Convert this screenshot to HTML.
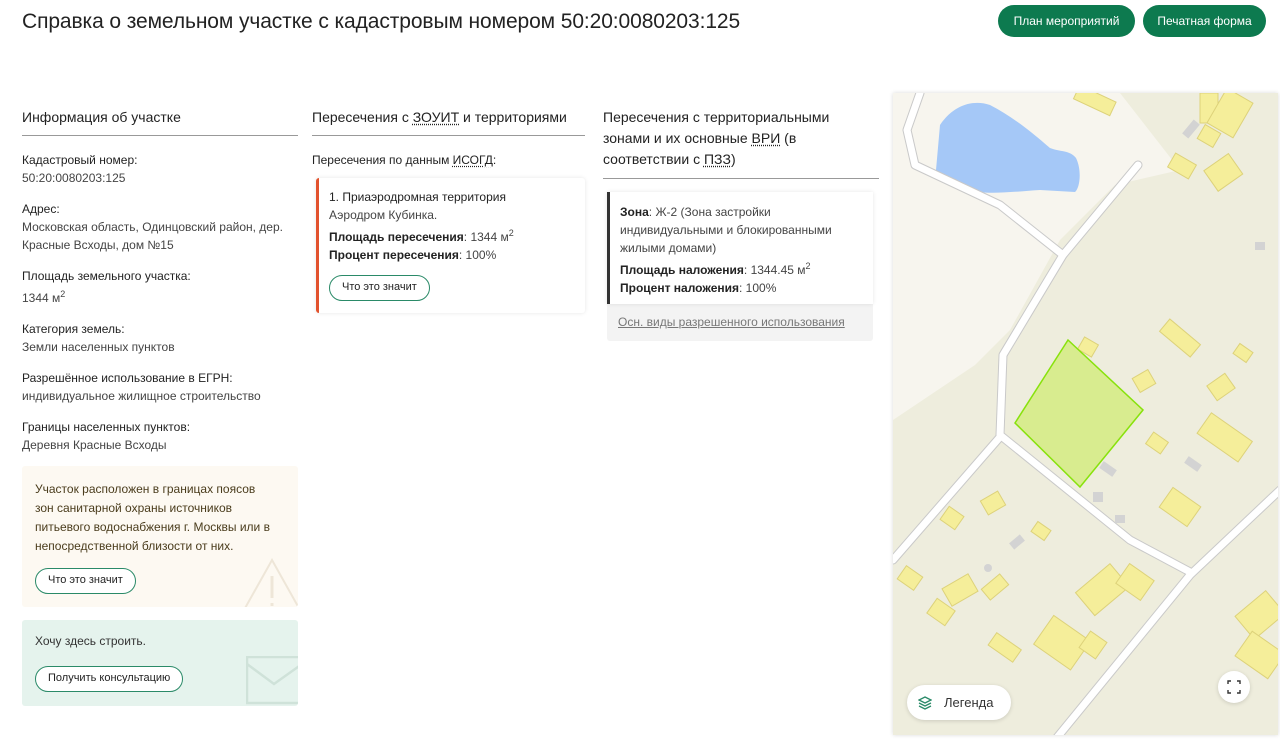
<!DOCTYPE html>
<html><head><meta charset="utf-8">
<style>
*{box-sizing:border-box;margin:0;padding:0}
body{width:1280px;height:748px;overflow:hidden;background:#fff;font-family:"Liberation Sans",sans-serif;color:#222;position:relative}
.abs{position:absolute}
h1{position:absolute;left:22px;top:10px;font-size:21px;font-weight:normal;color:#222;letter-spacing:-0.1px}
.gbtn{position:absolute;top:5px;height:32px;border-radius:16px;background:#0d7a4f;color:#fff;font-size:12px;line-height:32px;text-align:center}
.ch{position:absolute;font-size:14px;line-height:21px;color:#222;border-bottom:1px solid #999}
.lbl{font-size:12px;color:#222;line-height:18px}
.val{font-size:12px;color:#444;line-height:18px}
.blk{margin-bottom:13px}
u{text-decoration:underline dotted;text-underline-offset:2px}
.ob{display:inline-block;border:1.5px solid #2a8a68;border-radius:14px;height:26px;line-height:23px;padding:0 12px;font-size:11px;color:#222;background:#fff}
b{font-weight:bold;color:#222}
sup{font-size:9px}
</style></head><body>
<h1>Справка о земельном участке с кадастровым номером 50:20:0080203:125</h1>
<div class="gbtn" style="left:998px;width:137px">План мероприятий</div>
<div class="gbtn" style="left:1143px;width:123px">Печатная форма</div>

<div class="ch" style="left:22px;top:107px;width:276px;height:29px">Информация об участке</div>
<div class="abs" style="left:22px;top:151px;width:276px">
<div class="blk"><div class="lbl">Кадастровый номер:</div><div class="val">50:20:0080203:125</div></div>
<div class="blk"><div class="lbl">Адрес:</div><div class="val">Московская область, Одинцовский район, дер. Красные Всходы, дом №15</div></div>
<div class="blk"><div class="lbl">Площадь земельного участка:</div><div class="val">1344 м<sup>2</sup></div></div>
<div class="blk"><div class="lbl">Категория земель:</div><div class="val">Земли населенных пунктов</div></div>
<div class="blk"><div class="lbl">Разрешённое использование в ЕГРН:</div><div class="val">индивидуальное жилищное строительство</div></div>
<div class="blk"><div class="lbl">Границы населенных пунктов:</div><div class="val">Деревня Красные Всходы</div></div>
</div>
<div class="abs" style="left:22px;top:466px;width:276px;height:141px;background:#fdf9f2;border-radius:3px;overflow:hidden">
<div style="position:absolute;left:13px;top:14px;width:238px;font-size:12px;line-height:19px;color:#4a3c1c">Участок расположен в границах поясов зон санитарной охраны источников питьевого водоснабжения г. Москвы или в непосредственной близости от них.</div>
<svg style="position:absolute;left:220px;top:90px" width="60" height="55"><path d="M30 4 L58 54 L2 54 Z" fill="none" stroke="#eee6d8" stroke-width="2"/><path d="M30 20 V42 M30 47 V50" stroke="#eee6d8" stroke-width="3"/></svg>
<div class="ob" style="position:absolute;left:13px;top:102px">Что это значит</div>
</div>
<div class="abs" style="left:22px;top:620px;width:276px;height:86px;background:#e5f3ed;border-radius:3px;overflow:hidden">
<div style="position:absolute;left:13px;top:14px;font-size:12px;color:#333">Хочу здесь строить.</div>
<svg style="position:absolute;left:224px;top:36px" width="56" height="50"><rect x="1" y="1" width="60" height="46" fill="none" stroke="#cfe2d9" stroke-width="2.5"/><path d="M1 8 L28 28 L56 8" fill="none" stroke="#cfe2d9" stroke-width="2.5"/></svg>
<div class="ob" style="position:absolute;left:13px;top:46px">Получить консультацию</div>
</div>

<div class="ch" style="left:312px;top:107px;width:273px;height:29px">Пересечения с <u>ЗОУИТ</u> и территориями</div>
<div class="abs lbl" style="left:312px;top:151px">Пересечения по данным <u>ИСОГД</u>:</div>
<div class="abs" style="left:316px;top:178px;width:269px;height:135px;border-left:3px solid #e2522d;box-shadow:0 0 4px rgba(0,0,0,.1);border-radius:3px;padding:10px 10px">
<div class="lbl">1. Приаэродромная территория</div>
<div class="val">Аэродром Кубинка.</div>
<div class="val"><b>Площадь пересечения</b>: 1344 м<sup>2</sup></div>
<div class="val"><b>Процент пересечения</b>: 100%</div>
<div class="ob" style="margin-top:11px">Что это значит</div>
</div>

<div class="ch" style="left:603px;top:107px;width:276px;height:72px">Пересечения с территориальными зонами и их основные <u>ВРИ</u> (в соответствии с <u>ПЗЗ</u>)</div>
<div class="abs" style="left:607px;top:192px;width:266px;height:149px;background:#f3f3f3;border-radius:3px"></div>
<div class="abs" style="left:607px;top:192px;width:266px;height:112px;background:#fff;border-left:3px solid #333;box-shadow:0 0 4px rgba(0,0,0,.1);padding:11px 10px">
<div class="val"><b>Зона</b>: Ж-2 (Зона застройки индивидуальными и блокированными жилыми домами)</div>
<div class="val"><b>Площадь наложения</b>: 1344.45 м<sup>2</sup></div>
<div class="val"><b>Процент наложения</b>: 100%</div>
</div>
<div class="abs" style="left:618px;top:315px;font-size:12px;color:#777;text-decoration:underline">Осн. виды разрешенного использования</div>

<div class="abs" style="left:893px;top:93px;width:385px;height:642px;overflow:hidden;box-shadow:0 0 4px rgba(0,0,0,.15)">
<svg width="385" height="642" viewBox="893 93 385 642">
<rect x="893" y="93" width="385" height="642" fill="#eeeddd"/>
<path d="M893 93 L1120 93 L1180 170 L1115 185 L1060 240 L1010 330 L975 365 L893 420 Z" fill="#f7f5ee"/>
<path d="M940 125 C955 103 975 100 990 105 C1015 118 1035 135 1050 148 C1060 152 1070 150 1076 158 C1082 170 1080 188 1075 192 L1040 190 C1010 192 985 195 970 190 C955 186 937 182 936 170 Z" fill="#a5c8f7"/>
<g fill="none" stroke-linecap="round" stroke-linejoin="round">
<g stroke="#c9c9c9" stroke-width="9">
<path d="M920 93 L907 130 L915 165 L1000 205 L1063 255"/>
<path d="M1138 165 L1063 255 L1003 355 L1000 435 L1130 540 L1190 572"/>
<path d="M1000 437 L893 560"/>
<path d="M1280 490 L1190 575 L1055 740"/>
</g>
<g stroke="#fff" stroke-width="7">
<path d="M920 93 L907 130 L915 165 L1000 205 L1063 255"/>
<path d="M1138 165 L1063 255 L1003 355 L1000 435 L1130 540 L1190 572"/>
<path d="M1000 437 L893 560"/>
<path d="M1280 490 L1190 575 L1055 740"/>
</g></g>
<g fill="#f5ee9a" stroke="#ddd27a" stroke-width="1">
<rect x="1075" y="93" width="40" height="15" transform="rotate(25 1095 100)"/>
<rect x="1200" y="93" width="18" height="30"/><rect x="1215" y="93" width="30" height="40" transform="rotate(30 1230 113)"/>
<rect x="1200" y="128" width="18" height="16" transform="rotate(30 1209 136)"/>
<rect x="1170" y="158" width="24" height="16" transform="rotate(30 1182 166)"/>
<rect x="1208" y="160" width="30" height="25" transform="rotate(-35 1223 172)"/>
<rect x="1160" y="330" width="40" height="16" transform="rotate(40 1180 338)"/>
<rect x="1080" y="340" width="16" height="14" transform="rotate(30 1088 347)"/>
<rect x="1135" y="373" width="18" height="16" transform="rotate(-30 1144 381)"/>
<rect x="1210" y="378" width="22" height="18" transform="rotate(-35 1221 387)"/>
<rect x="1235" y="347" width="16" height="12" transform="rotate(35 1243 353)"/>
<rect x="1200" y="425" width="50" height="25" transform="rotate(35 1225 437)"/>
<rect x="1148" y="436" width="18" height="14" transform="rotate(35 1157 443)"/>
<rect x="1163" y="495" width="34" height="24" transform="rotate(35 1180 507)"/>
<rect x="983" y="495" width="20" height="16" transform="rotate(-30 993 503)"/>
<rect x="943" y="510" width="18" height="16" transform="rotate(35 952 518)"/>
<rect x="1033" y="525" width="16" height="12" transform="rotate(35 1041 531)"/>
<rect x="900" y="570" width="20" height="16" transform="rotate(35 910 578)"/>
<rect x="945" y="580" width="30" height="20" transform="rotate(-30 960 590)"/>
<rect x="983" y="580" width="24" height="14" transform="rotate(-40 995 587)"/>
<rect x="930" y="603" width="22" height="18" transform="rotate(35 941 612)"/>
<rect x="1080" y="575" width="45" height="30" transform="rotate(-40 1102 590)"/>
<rect x="1120" y="570" width="30" height="24" transform="rotate(35 1135 582)"/>
<rect x="1040" y="625" width="45" height="35" transform="rotate(35 1062 642)"/>
<rect x="1083" y="635" width="20" height="20" transform="rotate(35 1093 645)"/>
<rect x="990" y="640" width="30" height="15" transform="rotate(35 1005 647)"/>
<rect x="1240" y="600" width="40" height="30" transform="rotate(-40 1260 615)"/>
<rect x="1240" y="640" width="40" height="30" transform="rotate(35 1260 655)"/>
</g>
<g fill="#d3d3d3"><rect x="1182" y="125" width="18" height="8" transform="rotate(-50 1191 129)"/><rect x="1255" y="242" width="10" height="8"/><rect x="1185" y="460" width="16" height="8" transform="rotate(35 1193 464)"/><rect x="1093" y="492" width="10" height="10"/><rect x="1115" y="515" width="10" height="8"/><rect x="1010" y="538" width="14" height="8" transform="rotate(-40 1017 542)"/><circle cx="988" cy="568" r="4"/><rect x="1100" y="465" width="16" height="8" transform="rotate(35 1108 469)"/></g>
<path d="M1068 340 L1143 410 L1080 487 L1015 423 Z" fill="#d8ec8f" stroke="#88e20c" stroke-width="1.5"/>
</svg>
<div class="abs" style="left:14px;top:592px;width:104px;height:35px;border-radius:18px;background:#fff;box-shadow:0 1px 4px rgba(0,0,0,.15);font-size:13px;line-height:35px;padding-left:37px;color:#333">Легенда
<svg style="position:absolute;left:11px;top:11px" width="14" height="14"><path d="M7 1 L13 4 L7 7 L1 4 Z M1 7 L7 10 L13 7 M1 10 L7 13 L13 10" fill="none" stroke="#2a8a68" stroke-width="1.3"/></svg></div>
<div class="abs" style="left:325px;top:578px;width:32px;height:32px;border-radius:16px;background:#fff;box-shadow:0 1px 4px rgba(0,0,0,.15)">
<svg width="32" height="32"><path d="M10 13 V10 H13 M19 10 H22 V13 M22 19 V22 H19 M13 22 H10 V19" fill="none" stroke="#333" stroke-width="1.4"/></svg></div>
</div>
</body></html>
